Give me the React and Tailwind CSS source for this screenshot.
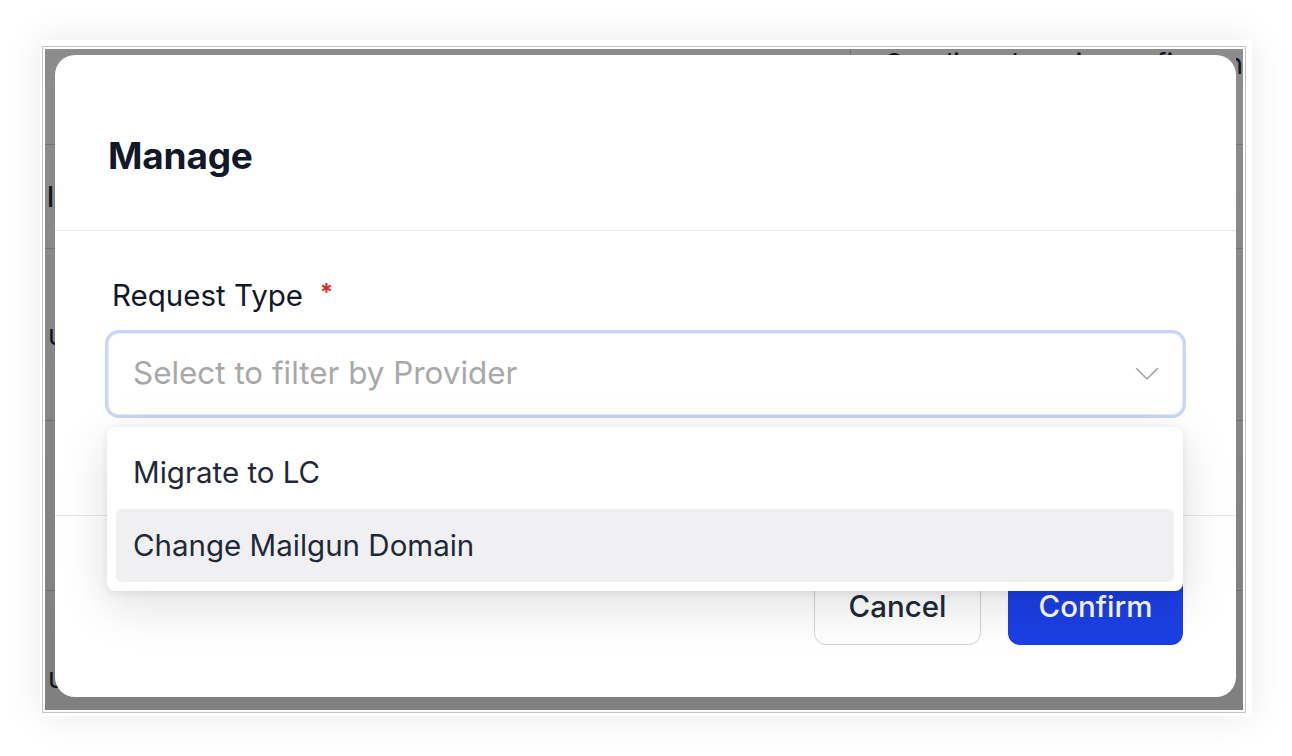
import React from 'react'

function Chevron() {
  return (
    <svg width="24" height="14" viewBox="0 0 24 14" fill="none" stroke="#a3a3a3" strokeWidth="1.6" strokeLinecap="round" strokeLinejoin="round">
      <polyline points="1.5 1.5 12 12 22.5 1.5" />
    </svg>
  )
}

// the table that sits behind the modal, only its edges show
function PageBehind() {
  return (
    <div className="relative z-0 flex flex-col h-full bg-white text-[28px] text-[#1f2937]">
      <div className="h-[96px] flex border-b border-[#d4d4d8]">
        <div className="w-[806px] border-r border-[#d4d4d8]"></div>
        <div className="flex-1 h-[6px] overflow-hidden whitespace-nowrap leading-[28px] pt-px pl-[34px]">
          Sending domain configuration
        </div>
        <div className="w-[7px] overflow-hidden whitespace-nowrap leading-[28px] pt-px flex justify-end">
          <span>on</span>
        </div>
      </div>
      <div className="h-[104px] flex items-center border-b border-[#d4d4d8] pl-[2px] font-medium">ledger</div>
      <div className="h-[172px] flex items-center border-b border-[#d4d4d8] pl-[3px]">user</div>
      <div className="h-[170px] border-b border-[#d4d4d8]"></div>
      <div className="flex-1 pt-[66px] pl-[3px]">user</div>
    </div>
  )
}

export default function App() {
  return (
    <div className="w-full h-[756px] bg-white pt-[40px] pl-[40px] font-['Inter','Noto_Sans',sans-serif]">
      <div className="w-[1212px] h-[676px] bg-white pl-[2px] pr-[6px] pt-[6px] pb-[3px] shadow-[0_0_36px_rgba(0,0,0,0.09)]">
        <div className="h-full border border-[#c4c4c4] p-[2px] bg-white">
          <div className="relative w-[1198px] h-[661px] overflow-hidden">
            <PageBehind />
            <div className="absolute z-10 inset-0 bg-linear-to-b from-black/[0.45] to-black/[0.5] pl-[10px] pt-[6px]">
              <div className="w-[1181px] h-[642px] bg-white rounded-[20px] flex flex-col">
                <div className="h-[176px] flex items-center pl-[53px] pt-[26px] border-b border-[#e5e7eb] shrink-0">
                  <h2 className="text-[37px] font-bold text-[#111827] tracking-[-0.2px]">Manage</h2>
                </div>

                <div className="h-[284px] shrink-0 px-[50px] pt-[44px]">
                  <div className="flex items-center h-[40px] pl-[7px] gap-[17px]">
                    <span className="text-[29.5px] text-[#111827]">Request Type</span>
                    <span className="text-[24px] font-semibold text-[#dc2626] leading-none -mt-[4px]">*</span>
                  </div>
                  <div className="relative mt-[15px]">
                    <div className="h-[88px] flex items-center justify-between rounded-[14px] border-[3px] border-[#c9d5f6] bg-white pl-[25px] pr-[24px] shadow-[inset_0_0_0_1px_#e8ecf7]">
                      <span className="text-[31.4px] text-[#a8a8a8]">Select to filter by Provider</span>
                      <Chevron />
                    </div>
                    <div className="absolute z-10 left-[2px] right-[3px] top-[97px] bg-white rounded-[8px] p-[9px] shadow-[0_14px_50px_rgba(0,0,0,0.13),0_2px_8px_rgba(0,0,0,0.08)]">
                      <div className="h-[73px] flex items-center pl-[17px] text-[29.5px] text-[#1f2937] rounded-[6px]">Migrate to LC</div>
                      <div className="h-[73px] flex items-center pl-[17px] text-[29.5px] text-[#1f2937] rounded-[6px] bg-[#f0f0f2]">Change Mailgun Domain</div>
                    </div>
                  </div>
                </div>

                <div className="flex-1 border-t border-[#e5e7eb] flex justify-end items-start pt-[51px] pr-[53px] gap-[27px]">
                  <button className="w-[167px] h-[78px] rounded-[12px] border-[1.5px] border-[#cfd3da] bg-white text-[29.5px] font-medium text-[#1f2937]">
                    Cancel
                  </button>
                  <button className="w-[175px] h-[78px] rounded-[12px] bg-[#1b3fe3] text-[29.5px] font-medium text-white">
                    Confirm
                  </button>
                </div>
              </div>
            </div>
          </div>
        </div>
      </div>
    </div>
  )
}
